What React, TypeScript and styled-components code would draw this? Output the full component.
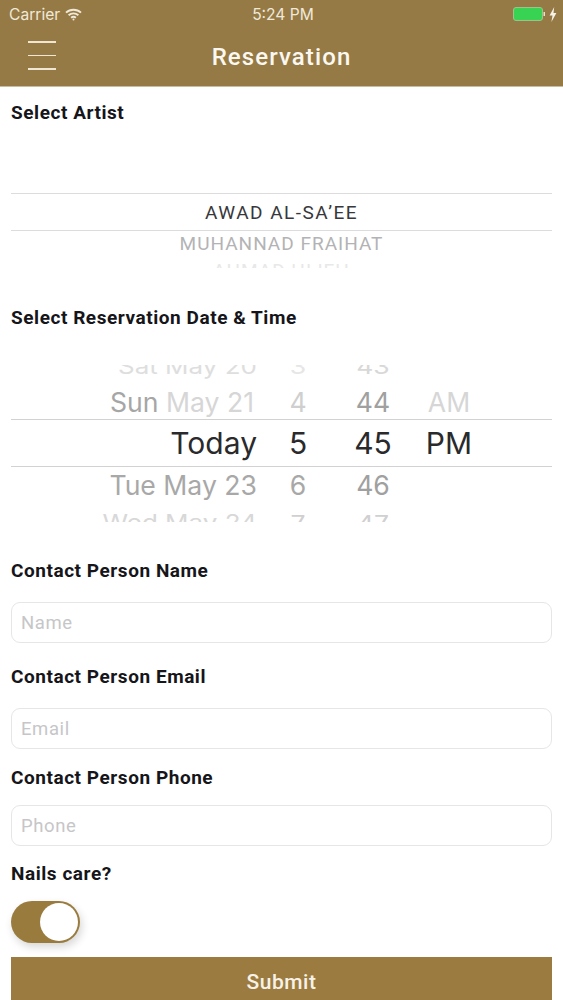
import React from 'react'
import styled, { createGlobalStyle } from 'styled-components'

const GlobalStyle = createGlobalStyle`
  html, body {
    margin: 0;
    padding: 0;
    background: #fff;
    overflow: hidden;
  }
  * {
    box-sizing: border-box;
  }
`
const Page = styled.div`
  width: 563px;
  height: 1000px;
  overflow: hidden;
  background: #fff;
  font-family: Roboto, "Liberation Sans", sans-serif;
`
const Header = styled.header`
  height: 87px;
  background: #957a46;
  border-bottom: 1px solid #c9bd9f;
`
const StatusBar = styled.div`
  height: 28px;
  padding: 0 6px 0 9px;
  display: grid;
  grid-template-columns: 1fr auto 1fr;
  align-items: center;
  color: #f1e9d8;
  font-family: Inter, sans-serif;
  font-size: 15.6px;
`
const Carrier = styled.div`
  display: flex;
  align-items: center;
  gap: 5px;
`
const Power = styled.div`
  display: flex;
  justify-content: flex-end;
  align-items: center;
  gap: 3px;
`
const NavRow = styled.div`
  height: 58px;
  padding: 0 28px;
  display: grid;
  grid-template-columns: 1fr auto 1fr;
  align-items: center;
`
const Burger = styled.div`
  width: 28px;
  display: flex;
  flex-direction: column;
  gap: 12px;
  margin-top: -3px;
`
const BurgerLine = styled.span`
  height: 1.5px;
  background: #efe6d4;
`
const Title = styled.h1`
  margin: 0 0 1px;
  color: #fbf8f1;
  font-size: 24px;
  font-weight: 500;
  letter-spacing: 1.1px;
`
const Form = styled.main`
  padding: 0 11px;
`
const Label = styled.div<{ $top: number }>`
  margin-top: ${p => p.$top}px;
  color: #15151a;
  font-size: 19px;
  line-height: 24px;
  font-weight: 700;
  letter-spacing: 0.55px;
`
const ArtistWheel = styled.div`
  margin-top: 68px;
  height: 75px;
  overflow: hidden;
  text-align: center;
  font-size: 19px;
`
const ArtistSelected = styled.div`
  height: 38px;
  line-height: 37px;
  color: #38383c;
  letter-spacing: 1.5px;
  border-top: 1.5px solid #dcdcdc;
  border-bottom: 1.5px solid #dcdcdc;
`
const ArtistRow = styled.div`
  height: 26px;
  line-height: 26px;
  color: #b3b3b5;
  letter-spacing: 1px;
`
const ArtistFaded = styled.div`
  height: 14px;
  margin-top: 7px;
  line-height: 14px;
  color: #e8e8e8;
  letter-spacing: 1px;
`
const DateWheel = styled.div`
  margin-top: 35px;
`
const WheelRow = styled.div<{ $height: number; $selected?: boolean; $edge?: string; $after?: number }>`
  height: ${p => p.$height}px;
  margin-bottom: ${p => p.$after ?? 0}px;
  overflow: hidden;
  display: grid;
  grid-template-columns: 246px 82px 68px 84px 1fr;
  grid-auto-rows: minmax(0, 1fr);
  align-items: ${p => p.$edge ?? 'center'};
  border-top: ${p => (p.$selected ? '1.5px solid #d2d2d2' : 'none')};
  border-bottom: ${p => (p.$selected ? '1.5px solid #d2d2d2' : 'none')};
  font-family: Inter, sans-serif;
`
const Cell = styled.div<{ $tone: string; $size?: number; $squash?: number; $end?: boolean; $inset?: number }>`
  padding-right: ${p => p.$inset ?? 0}px;
  color: ${p => p.$tone};
  font-size: ${p => p.$size ?? 26.6}px;
  line-height: 1;
  white-space: nowrap;
  text-align: ${p => (p.$end ? 'right' : 'center')};
  transform: scaleY(${p => p.$squash ?? 1});
`
const Day = styled.span<{ $tone: string }>`
  color: ${p => p.$tone};
`
const Input = styled.input<{ $top: number }>`
  display: block;
  width: 100%;
  height: 41px;
  margin-top: ${p => p.$top}px;
  padding: 0 9px;
  border: 1px solid #e6e6e6;
  border-radius: 9px;
  outline: none;
  background: #fff;
  font-family: Roboto, sans-serif;
  font-size: 18.5px;
  letter-spacing: 0.6px;
  &::placeholder {
    color: #c6c6c8;
    opacity: 1;
  }
`
const Switch = styled.div`
  width: 69px;
  height: 42px;
  margin-top: 15px;
  padding: 2px;
  border-radius: 21px;
  background: #9a7b3e;
  display: flex;
  justify-content: flex-end;
  box-shadow: 2px 4px 8px rgba(0, 0, 0, 0.16);
`
const Thumb = styled.span`
  width: 38px;
  height: 38px;
  border-radius: 50%;
  background: #fff;
`
const Submit = styled.button`
  display: block;
  width: 100%;
  height: 50px;
  margin-top: 14px;
  border: none;
  background: #9b7b3f;
  color: #f7f2e8;
  font-family: Roboto, sans-serif;
  font-size: 21px;
  font-weight: 500;
  letter-spacing: 0.5px;
`

const WifiIcon = () => (
  <svg width="17" height="13" viewBox="0 0 17 13" fill="none" stroke="#f1e9d8" strokeWidth="1.9">
    <path d="M1 4.6C5.2 .7 11.8 .7 16 4.6" />
    <path d="M3.6 7.2c2.8-2.5 7-2.5 9.8 0" />
    <path d="M6.1 9.7c1.4-1.1 3.4-1.1 4.8 0" />
    <circle cx="8.5" cy="11.6" r="1" fill="#f1e9d8" stroke="none" />
  </svg>
)

const BatteryIcon = () => (
  <svg width="33" height="14" viewBox="0 0 33 14">
    <rect x="0.5" y="0.5" width="29" height="13" rx="2.5" fill="#39d353" stroke="#9ac58a" />
    <rect x="30.5" y="5" width="1.5" height="4" fill="#e8e2d0" />
  </svg>
)

const BoltIcon = () => (
  <svg width="8" height="15" viewBox="0 0 8 15">
    <path d="M5.2 0 .6 8.4h2.9L2.4 15l5-9H4.5z" fill="#f7f2e8" />
  </svg>
)

export default function App() {
  return (
    <Page>
      <GlobalStyle />
      <Header>
        <StatusBar>
          <Carrier>
            Carrier
            <WifiIcon />
          </Carrier>
          <div>5:24 PM</div>
          <Power>
            <BatteryIcon />
            <BoltIcon />
          </Power>
        </StatusBar>
        <NavRow>
          <Burger>
            <BurgerLine />
            <BurgerLine />
            <BurgerLine />
          </Burger>
          <Title>Reservation</Title>
        </NavRow>
      </Header>
      <Form>
        <Label $top={14}>Select Artist</Label>
        <ArtistWheel>
          <ArtistSelected>AWAD AL-SA’EE</ArtistSelected>
          <ArtistRow>MUHANNAD FRAIHAT</ArtistRow>
          <ArtistFaded>AHMAD HIJEH</ArtistFaded>
        </ArtistWheel>
        <Label $top={38}>Select Reservation Date &amp; Time</Label>
        <DateWheel>
          <WheelRow $height={15} $after={5} $edge="end">
            <Cell $end $size={26} $tone="#dedede" $squash={0.8}>Sat May 20</Cell>
            <Cell $tone="#e6e6e6" $squash={0.8}>3</Cell>
            <Cell $tone="#d8d8d8" $squash={0.8}>43</Cell>
          </WheelRow>
          <WheelRow $height={34}>
            <Cell $end $inset={3} $tone="#d6d6d6"><Day $tone="#a6a6a6">Sun</Day> May 21</Cell>
            <Cell $tone="#cfcfcf">4</Cell>
            <Cell $tone="#a0a0a0">44</Cell>
            <Cell $tone="#d6d6d6">AM</Cell>
          </WheelRow>
          <WheelRow $height={48} $selected>
            <Cell $end $size={30} $tone="#2a2a2c">Today</Cell>
            <Cell $size={30} $tone="#2a2a2c">5</Cell>
            <Cell $size={30} $tone="#2a2a2c">45</Cell>
            <Cell $size={30} $tone="#2a2a2c">PM</Cell>
          </WheelRow>
          <WheelRow $height={36} $after={7}>
            <Cell $end $tone="#a8a8a8">Tue May 23</Cell>
            <Cell $tone="#a8a8a8">6</Cell>
            <Cell $tone="#a0a0a0">46</Cell>
          </WheelRow>
          <WheelRow $height={12} $edge="start">
            <Cell $end $size={26} $tone="#d8d8d8" $squash={0.8}>Wed May 24</Cell>
            <Cell $tone="#d0d0d0" $squash={0.8}>7</Cell>
            <Cell $tone="#d0d0d0" $squash={0.8}>47</Cell>
          </WheelRow>
        </DateWheel>
        <Label $top={37}>Contact Person Name</Label>
        <Input $top={19} placeholder="Name" readOnly />
        <Label $top={22}>Contact Person Email</Label>
        <Input $top={19} placeholder="Email" readOnly />
        <Label $top={17}>Contact Person Phone</Label>
        <Input $top={15} placeholder="Phone" readOnly />
        <Label $top={16}>Nails care?</Label>
        <Switch>
          <Thumb />
        </Switch>
        <Submit>Submit</Submit>
      </Form>
    </Page>
  )
}
